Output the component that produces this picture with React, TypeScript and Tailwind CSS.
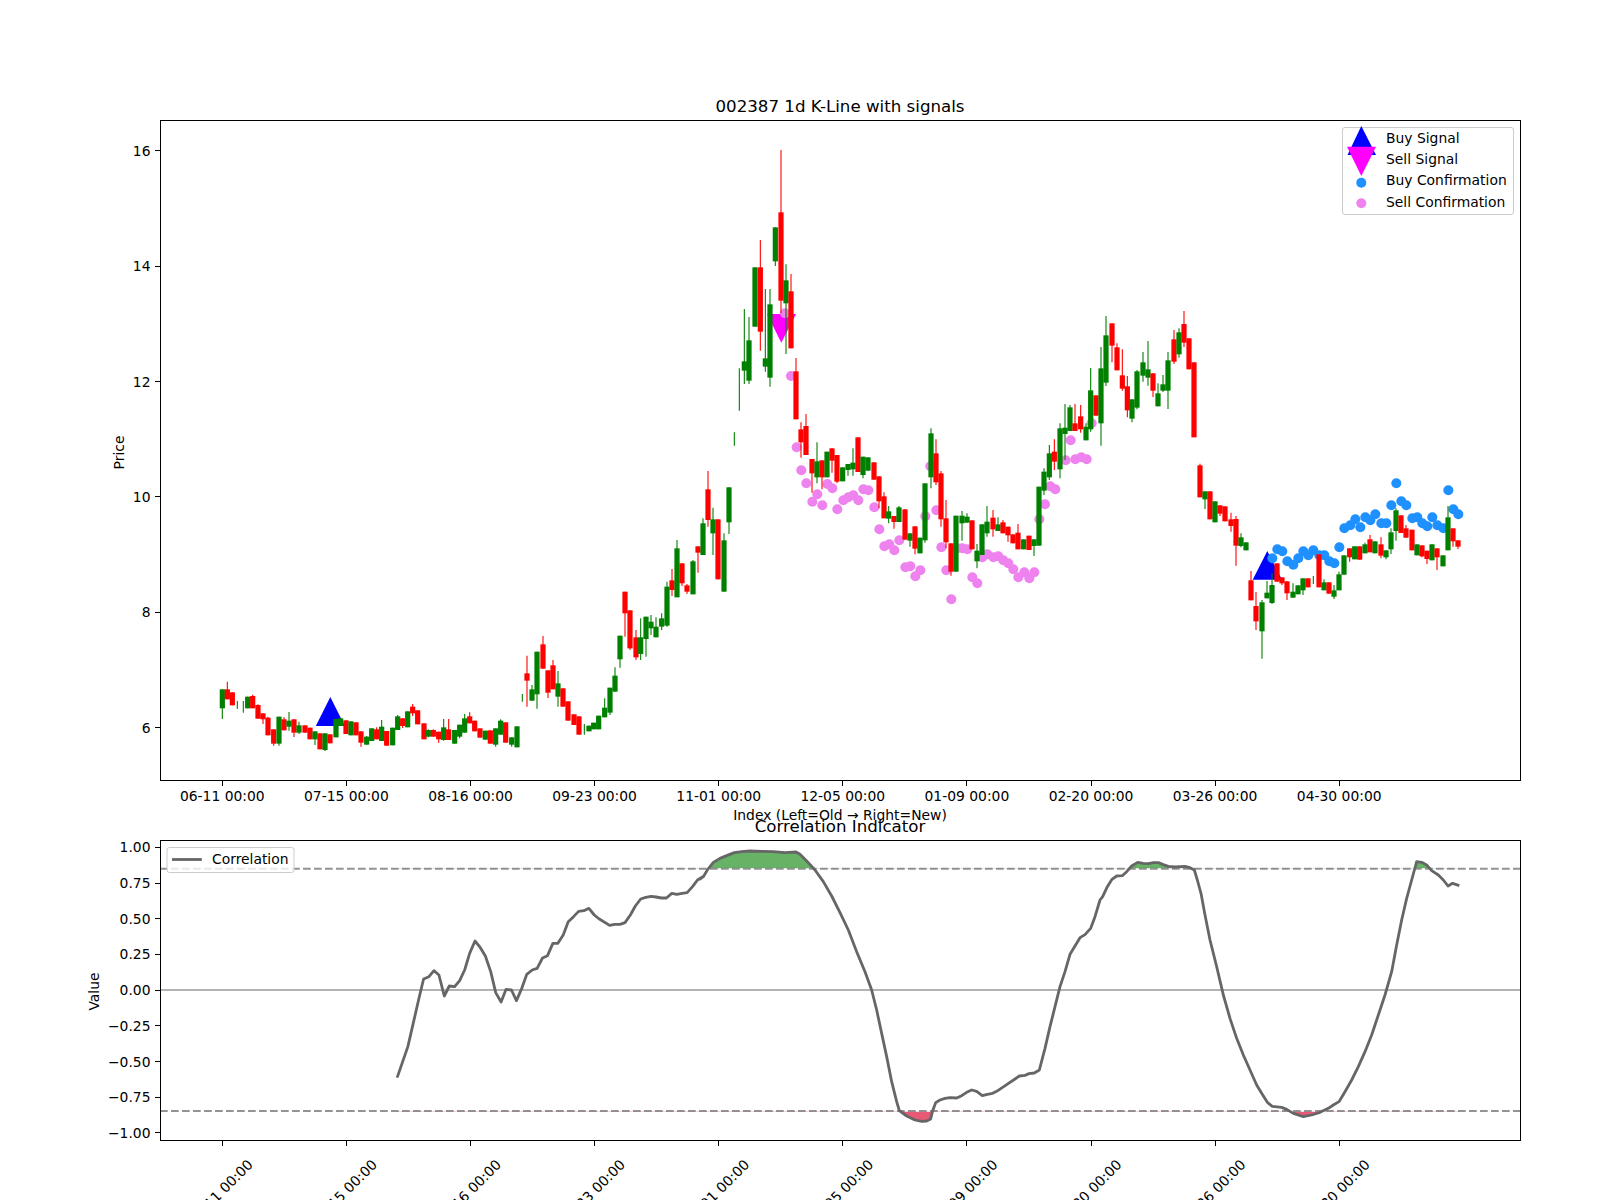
import React from "react";

type Row = [number, "r" | "g", number, number, number?, number?];
type Candle = { x: number; c: string; top: number; bot: number; wt: number; wb: number };

const conv = (x0: number, y0: number, rows: Row[]): Candle[] =>
  rows.map(([zx, c, t, b, wt, wb]) => ({
    x: x0 + zx / 3,
    c: c === "r" ? "#ff0000" : "#008000",
    top: y0 + t / 3,
    bot: y0 + b / 3,
    wt: y0 + (wt ?? t) / 3,
    wb: y0 + (wb ?? b) / 3,
  }));

const candles: Candle[] = [
  ...conv(150, 600, [
    [217, "g", 268, 325, 268, 357], [232, "r", 268, 298, 245, 298], [247, "r", 277, 316], [262, "g", 303, 303, 303, 327],
    [280, "g", 303, 303, 303, 338], [293, "g", 290, 325], [308, "r", 288, 325, 284, 325], [324, "r", 315, 356, 313, 356],
    [339, "r", 340, 358, 340, 372], [354, "r", 353, 406, 350, 406], [371, "r", 388, 431, 388, 437], [387, "g", 350, 431, 350, 437],
    [402, "r", 358, 391, 352, 391], [417, "g", 362, 380, 336, 392], [432, "r", 358, 398, 358, 411], [447, "g", 376, 398, 365, 402],
    [465, "r", 376, 398], [480, "r", 383, 418], [495, "g", 394, 418, 394, 435], [510, "r", 400, 448],
    [525, "g", 400, 450, 400, 453], [540, "r", 403, 430], [558, "g", 357, 412], [572, "g", 355, 378],
    [588, "r", 361, 402], [603, "g", 364, 406], [618, "r", 367, 406], [633, "r", 394, 428, 394, 440],
    [650, "g", 410, 434, 408, 434], [665, "g", 385, 423], [680, "r", 388, 418, 382, 418], [695, "g", 380, 423, 360, 423],
    [710, "r", 393, 437], [728, "g", 383, 436], [743, "g", 349, 390, 345, 390], [758, "r", 355, 378, 355, 384],
    [773, "g", 334, 382], [788, "r", 320, 340, 312, 348], [803, "r", 331, 373], [822, "r", 370, 418],
    [835, "g", 390, 410, 388, 412], [850, "r", 390, 410, 388, 410], [866, "r", 395, 418, 395, 428], [881, "g", 382, 420, 357, 422],
    [896, "r", 388, 420, 357, 420], [914, "g", 390, 431], [929, "g", 374, 410, 374, 415], [944, "g", 355, 398, 342, 398],
    [959, "r", 349, 370, 337, 370], [974, "r", 362, 394], [990, "r", 385, 413], [1006, "g", 392, 419],
    [1021, "r", 391, 431], [1037, "g", 385, 434, 385, 440], [1052, "g", 362, 404, 358, 404], [1067, "r", 367, 428],
    [1085, "g", 412, 434, 412, 440], [1101, "g", 379, 442], [1117, "g", 282, 282, 282, 305], [1131, "r", 220, 242, 167, 320],
    [1146, "g", 268, 302, 255, 302], [1161, "g", 155, 283, 155, 326], [1179, "r", 133, 206, 108, 206], [1194, "r", 211, 278, 211, 294],
    [1209, "r", 196, 268, 180, 268], [1224, "g", 250, 290, 213, 320], [1239, "r", 265, 320], [1254, "r", 304, 362],
    [1272, "r", 343, 375], [1287, "r", 349, 404], [1303, "g", 372, 372, 372, 404], [1317, "g", 377, 394],
    [1331, "g", 368, 388], [1346, "g", 347, 388], [1364, "g", 323, 352, 295, 352], [1380, "g", 263, 338, 263, 345],
    [1395, "g", 227, 275, 202, 275], [1410, "g", 107, 178, 107, 203],
  ]),
  ...conv(520, 400, [
    [315, "r", 575, 640, 575, 710], [330, "r", 631, 745, 631, 750], [348, "r", 712, 772, 690, 780], [362, "g", 712, 762, 655, 780],
    [378, "g", 650, 717, 650, 770], [393, "g", 665, 685, 645, 705], [408, "g", 680, 712, 652, 712], [425, "g", 655, 680, 640, 690],
    [441, "g", 560, 677, 545, 680], [456, "r", 541, 570, 507, 588], [471, "g", 445, 592, 420, 592], [486, "r", 490, 550, 490, 558],
    [501, "r", 556, 575, 552, 582], [519, "g", 484, 583, 480, 583], [534, "r", 439, 458, 439, 518], [549, "g", 370, 465, 355, 465],
    [564, "r", 268, 360, 213, 380], [579, "g", 358, 400, 323, 465], [594, "r", 358, 538], [612, "g", 421, 575, 400, 575],
    [627, "g", 262, 367, 262, 402], [643, "g", 97, 97, 97, 137],
  ]),
  ...conv(650, 130, [
    [268, "g", 715, 715, 715, 842], [283, "g", 694, 722, 537, 762], [297, "g", 631, 752, 561, 762], [315, "g", 412, 590],
    [331, "r", 412, 605, 330, 662], [346, "g", 685, 710, 477, 725], [360, "g", 523, 743, 477, 770], [376, "g", 292, 394, 292, 408],
    [393, "r", 247, 512, 60, 550], [408, "g", 451, 520, 403, 672], [423, "r", 484, 655, 432, 655], [438, "r", 724, 868, 684, 868],
  ]),
  ...conv(780, 420, [
    [63, "r", 28, 67, 7, 113], [78, "r", 18, 105, -18, 105], [96, "r", 117, 160, 117, 218], [111, "g", 124, 172, 67, 190],
    [126, "r", 121, 172, 121, 208], [141, "g", 95, 172], [156, "r", 85, 122, 85, 158], [171, "r", 105, 185, 105, 190],
    [188, "g", 142, 184], [204, "g", 132, 150, 132, 167], [219, "g", 128, 148, 85, 167], [234, "r", 52, 156],
    [249, "g", 110, 165, 110, 175], [264, "g", 112, 152], [282, "r", 127, 179], [297, "r", 169, 244, 169, 265],
    [312, "r", 229, 295, 217, 295], [326, "g", 274, 296, 258, 310], [342, "r", 288, 306, 288, 326], [357, "g", 262, 306, 258, 306],
    [375, "r", 268, 359], [390, "g", 340, 362, 340, 380], [405, "r", 319, 386, 319, 403], [420, "g", 353, 400],
    [435, "g", 190, 361, 190, 368], [453, "g", 40, 172, 25, 205], [468, "r", 100, 187, 58, 195], [483, "r", 160, 298, 153, 320],
    [498, "r", 295, 367, 240, 385], [513, "r", 370, 455, 370, 467], [528, "g", 287, 455], [546, "g", 287, 310, 273, 362],
    [561, "g", 290, 308, 280, 308], [576, "r", 301, 388], [591, "g", 392, 424, 372, 445], [606, "g", 313, 405],
    [621, "g", 305, 340, 258, 350], [639, "r", 293, 328, 270, 350], [654, "g", 313, 333, 292, 333], [669, "r", 307, 340, 300, 340],
    [684, "r", 320, 346, 320, 365], [699, "r", 343, 370], [714, "r", 338, 388, 312, 388], [731, "g", 358, 388],
    [747, "r", 347, 390], [762, "g", 358, 378, 358, 408], [777, "g", 200, 377],
  ]),
  ...conv(1040, 300, [
    [12, "g", 515, 572, 505, 585], [28, "g", 460, 532, 435, 540], [43, "r", 455, 485, 418, 510], [60, "g", 385, 508, 370, 535],
    [75, "g", 383, 402, 312, 480], [90, "g", 322, 393, 315, 393], [105, "r", 370, 393, 312, 393], [122, "r", 349, 388, 315, 398],
    [138, "g", 380, 421, 370, 421], [152, "g", 271, 388, 204, 395], [168, "r", 286, 347], [183, "g", 205, 370, 141, 437],
    [198, "g", 106, 248, 48, 258], [216, "r", 70, 137, 70, 187], [231, "r", 142, 211, 130, 211], [247, "r", 226, 266, 148, 272],
    [262, "r", 259, 331, 228, 352], [276, "g", 298, 356, 298, 367], [291, "g", 214, 323, 210, 328], [309, "g", 187, 227, 156, 245],
    [324, "g", 208, 233, 123, 257], [339, "r", 220, 272, 220, 291], [354, "g", 280, 319, 250, 319], [369, "g", 253, 272, 225, 276],
    [384, "g", 181, 272, 156, 327], [402, "r", 118, 185, 90, 192], [417, "g", 97, 163, 85, 173], [432, "r", 72, 128, 33, 141],
    [447, "r", 115, 208], [462, "r", 187, 412], [480, "r", 496, 592, 491, 592], [495, "g", 574, 598, 574, 627],
    [510, "r", 574, 658], [525, "g", 604, 667], [540, "r", 616, 641, 616, 648], [555, "r", 619, 664],
  ]),
  ...conv(1220, 450, [
    [33, "r", 208, 228, 188, 245], [48, "r", 207, 287, 198, 347], [63, "g", 262, 288, 250, 292], [78, "g", 277, 301],
    [93, "r", 391, 451, 363, 451], [108, "r", 468, 514, 426, 540], [126, "g", 457, 544, 450, 626], [141, "g", 428, 445, 393, 445],
    [156, "g", 405, 459, 370, 462], [171, "r", 340, 395], [186, "r", 382, 400, 382, 405], [201, "r", 394, 430, 394, 450],
    [219, "g", 425, 443, 400, 443], [234, "g", 406, 433], [249, "g", 385, 421, 385, 435], [264, "r", 385, 412],
    [280, "g", 378, 378, 378, 402], [297, "r", 313, 412], [312, "g", 397, 421, 388, 421], [327, "r", 397, 431],
    [342, "g", 421, 440, 405, 447], [357, "g", 373, 421, 365, 421], [372, "g", 316, 374], [389, "r", 295, 322, 295, 335],
    [404, "g", 289, 328], [419, "r", 289, 329], [435, "g", 283, 310, 278, 310], [450, "r", 268, 307, 255, 307],
    [465, "g", 274, 310], [483, "r", 283, 317, 262, 325], [498, "g", 301, 322, 301, 328], [513, "g", 247, 298, 235, 312],
    [528, "g", 181, 243, 175, 272], [543, "r", 196, 249], [558, "r", 235, 263, 225, 263], [576, "r", 239, 301],
    [591, "g", 283, 316], [606, "r", 286, 319, 286, 322], [621, "r", 302, 327, 302, 342], [636, "g", 283, 331],
    [651, "r", 295, 322, 295, 360], [669, "g", 316, 349], [684, "g", 202, 301, 168, 301], [699, "r", 235, 274, 235, 290],
    [714, "r", 271, 290, 271, 297],
  ]),
];

const pts = (x0: number, y0: number, list: number[][], sx = 3) => list.map(([x, y]) => [x0 + x / sx, y0 + y / 3]);

const pink = [
  [785, 313.3], [791, 376],
  ...pts(780, 420, [
    [50, 82], [64, 151], [79, 190], [97, 245], [112, 223], [127, 256], [142, 192], [157, 205], [172, 268], [190, 241], [205, 232], [220, 226],
    [235, 241], [250, 208], [265, 211], [283, 262], [298, 328], [313, 379], [328, 373], [343, 391], [358, 361], [376, 442], [391, 439], [406, 469],
    [421, 451], [436, 289], [451, 139], [469, 271], [484, 382], [499, 451], [514, 538], [532, 385], [547, 385], [562, 388], [577, 472], [592, 490],
    [607, 412], [622, 403], [640, 412], [655, 409], [670, 421], [685, 430], [700, 448], [715, 472], [733, 457], [748, 475], [763, 457], [778, 298],
    [795, 253], [811, 199], [826, 208], [857, 121], [886, 118], [872, 61],
  ]),
  ...pts(1040, 300, [[124, 472], [140, 478], [155, 370]]),
];

const blue = pts(1220, 450, [
  [157, 325], [172, 298], [187, 304], [202, 334], [220, 344], [235, 325], [250, 304], [265, 316], [280, 301], [298, 316], [313, 316], [328, 334], [343, 340],
  [358, 292], [373, 235], [391, 226], [406, 208], [421, 232], [436, 202], [451, 211], [466, 193], [484, 220], [499, 220], [514, 166], [529, 100], [544, 154],
  [559, 166], [577, 205], [592, 202], [607, 220], [622, 229], [637, 202], [652, 226], [670, 235], [685, 121], [700, 178], [715, 193],
]);

const corr = [
  ...pts(150, 820, [
    [692, 773], [722, 680], [737, 610], [752, 540], [766, 477], [781, 470], [795, 452], [809, 465], [824, 528], [838, 498], [853, 500], [867, 482], [881, 450],
    [895, 400], [910, 363], [925, 383], [939, 408], [954, 455], [968, 518], [983, 546], [997, 508], [1012, 510], [1026, 542], [1041, 505], [1055, 463], [1070, 450],
    [1084, 445], [1099, 414], [1113, 407], [1128, 370], [1142, 370], [1157, 345], [1171, 305], [1186, 290], [1200, 274], [1215, 272], [1229, 265], [1244, 285],
    [1258, 297], [1287, 316], [1301, 313], [1316, 313], [1330, 308], [1345, 285], [1359, 258], [1374, 237], [1388, 232], [1403, 229], [1417, 231], [1432, 234],
    [1446, 234], [1461, 220], [1475, 223], [1490, 220], [1504, 218], [1519, 200], [1533, 180], [1548, 170],
  ], 2.8),
  ...pts(700, 840, [
    [0, 117], [10, 110], [22, 90], [40, 67], [60, 55], [80, 47], [103, 38], [125, 35], [150, 33], [185, 34], [220, 35], [255, 38], [288, 36], [300, 43], [320, 63],
    [345, 90], [370, 125], [395, 168], [420, 218], [445, 270], [470, 335], [495, 395], [515, 450], [530, 510], [545, 580], [560, 650], [575, 725], [590, 785],
    [598, 812], [620, 828], [645, 840], [665, 844], [680, 843], [692, 837], [698, 812], [707, 788], [720, 780], [735, 775], [750, 773], [770, 774], [785, 767],
    [800, 757], [815, 750], [830, 754], [847, 767], [862, 763], [878, 760], [890, 754], [920, 734], [945, 717], [958, 708], [975, 706], [987, 701], [1003, 699],
    [1018, 690], [1035, 625], [1050, 560], [1065, 500], [1080, 440], [1095, 395], [1110, 343], [1125, 318], [1140, 293], [1155, 284], [1172, 265], [1185, 230],
  ]),
  ...pts(1090, 840, [
    [30, 180], [38, 170], [52, 140], [66, 118], [80, 108], [97, 107], [110, 95], [125, 78], [143, 67], [160, 70], [175, 71], [190, 68], [205, 68], [220, 74], [235, 79],
    [255, 81], [270, 80], [285, 79], [300, 83], [313, 90], [322, 120], [333, 160], [345, 225], [360, 300], [380, 380], [400, 465], [420, 535], [440, 595], [460, 645],
    [480, 690], [500, 735], [515, 760], [532, 787], [547, 799], [575, 802], [590, 808], [610, 820], [640, 830], [665, 825], [690, 817], [715, 805], [730, 795],
    [747, 785], [765, 755], [785, 720], [805, 680], [825, 635], [845, 585], [865, 525], [885, 465], [905, 395], [920, 315], [935, 240], [950, 175], [965, 120],
    [980, 65], [995, 67], [1010, 75], [1025, 92], [1045, 105], [1060, 120], [1074, 138], [1088, 130], [1108, 137],
  ]),
];

const poly = corr.map((p) => p.join(",")).join(" ");
const first = corr[0][0];
const last = corr[corr.length - 1][0];
const fillPoly = (y: number) => `${first},${y} ${poly} ${last},${y}`;

const dates = ["06-11 00:00", "07-15 00:00", "08-16 00:00", "09-23 00:00", "11-01 00:00", "12-05 00:00", "01-09 00:00", "02-20 00:00", "03-26 00:00", "04-30 00:00"];
const tickX = dates.map((_, i) => 222.3 + i * 124.1);
const priceTicks = [
  ["16", 150.5], ["14", 266], ["12", 381.5], ["10", 496.5], ["8", 612], ["6", 727.5],
] as [string, number][];
const valTicks = ["1.00", "0.75", "0.50", "0.25", "0.00", "−0.25", "−0.50", "−0.75", "−1.00"].map((t, i) => [t, 847.3 + i * 35.7] as [string, number]);

const label = "fill-black font-['DejaVu_Sans',sans-serif] text-[13.89px]";
const title = "fill-black font-['DejaVu_Sans',sans-serif] text-[16.67px]";
const snap = (v: number) => Math.floor(v) + 0.5;

function PriceChart() {
  return (
    <svg className="block h-[822px] w-[1600px] shrink-0 overflow-visible" viewBox="0 0 1600 822">
      <polygon points="330.3,697 315.8,726 344.8,726" fill="#0000ff" />
      <polygon points="1267.3,551 1252.7,579.7 1282,579.7" fill="#0000ff" />
      <polygon points="781.3,342.7 767,314 796,314" fill="#ff00ff" />
      {pink.map(([x, y], i) => <circle key={i} cx={x} cy={y} r={5} fill="#ee82ee" />)}
      {blue.map(([x, y], i) => <circle key={i} cx={x} cy={y} r={5} fill="#1e90ff" />)}
      {candles.map((d, i) => (
        <g key={i}>
          <line x1={d.x} x2={d.x} y1={d.wt} y2={d.wb} stroke={d.c} strokeWidth={1.1} />
          {d.bot > d.top && <rect x={d.x - 2.6} y={d.top} width={5.2} height={d.bot - d.top} fill={d.c} />}
        </g>
      ))}
      <rect x={160.5} y={120.5} width={1360} height={660} fill="none" stroke="#000" strokeWidth={1} shapeRendering="crispEdges" />
      {priceTicks.map(([t, y]) => (
        <g key={t}>
          <line x1={155} x2={160} y1={snap(y)} y2={snap(y)} stroke="#000" strokeWidth={1} shapeRendering="crispEdges" />
          <text x={150.5} y={y + 5} textAnchor="end" className={label}>{t}</text>
        </g>
      ))}
      {tickX.map((x, i) => (
        <g key={x}>
          <line x1={snap(x)} x2={snap(x)} y1={781} y2={786} stroke="#000" strokeWidth={1} shapeRendering="crispEdges" />
          <text x={x} y={801} textAnchor="middle" className={label}>{dates[i]}</text>
        </g>
      ))}
      <text x={840} y={112} textAnchor="middle" className={title}>002387 1d K-Line with signals</text>
      <text x={840} y={820} textAnchor="middle" className={label}>Index (Left=Old → Right=New)</text>
      <text transform="translate(124,452.5) rotate(-90)" textAnchor="middle" className={label}>Price</text>
      <rect x={1342.5} y={127.5} width={171} height={87} rx={2.5} fill="#fff" fillOpacity={0.8} stroke="#ccc" strokeWidth={1} />
      <polygon points="1361.3,126 1347.5,155 1376,155" fill="#0000ff" />
      <polygon points="1361.3,176 1347,146.7 1376,146.7" fill="#ff00ff" />
      <circle cx={1361.3} cy={182.7} r={5} fill="#1e90ff" />
      <circle cx={1361.3} cy={203.3} r={5} fill="#ee82ee" />
      <text x={1386} y={143} className={label}>Buy Signal</text>
      <text x={1386} y={164} className={label}>Sell Signal</text>
      <text x={1386} y={185} className={label}>Buy Confirmation</text>
      <text x={1386} y={206.5} className={label}>Sell Confirmation</text>
    </svg>
  );
}

function CorrelationChart() {
  return (
    <svg className="block h-[378px] w-[1600px] shrink-0 overflow-visible" viewBox="0 822 1600 378">
      <defs>
        <clipPath id="above"><rect x={160} y={840} width={1360} height={28.6} /></clipPath>
        <clipPath id="below"><rect x={160} y={1111.4} width={1360} height={28} /></clipPath>
      </defs>
      <polygon points={fillPoly(868.6)} fill="#008000" fillOpacity={0.6} clipPath="url(#above)" />
      <polygon points={fillPoly(1111.4)} fill="#dc143c" fillOpacity={0.7} clipPath="url(#below)" />
      <line x1={160} x2={1520} y1={868.8} y2={868.8} stroke="#808080" strokeOpacity={0.85} strokeWidth={2} strokeDasharray="7.7 3.3" />
      <line x1={160} x2={1520} y1={1111} y2={1111} stroke="#808080" strokeOpacity={0.85} strokeWidth={2} strokeDasharray="7.7 3.3" />
      <line x1={160} x2={1520} y1={990} y2={990} stroke="#808080" strokeOpacity={0.6} strokeWidth={2} />
      <polyline points={poly} fill="none" stroke="#666666" strokeWidth={2.8} strokeLinejoin="round" />
      <rect x={160.5} y={840.5} width={1360} height={300} fill="none" stroke="#000" strokeWidth={1} shapeRendering="crispEdges" />
      {valTicks.map(([t, y]) => (
        <g key={t}>
          <line x1={155} x2={160} y1={snap(y)} y2={snap(y)} stroke="#000" strokeWidth={1} shapeRendering="crispEdges" />
          <text x={150.5} y={y + 5} textAnchor="end" className={label}>{t}</text>
        </g>
      ))}
      {tickX.map((x, i) => (
        <g key={x}>
          <line x1={snap(x)} x2={snap(x)} y1={1141} y2={1146} stroke="#000" strokeWidth={1} shapeRendering="crispEdges" />
          <text transform={`translate(${x - 2},1192) rotate(-45)`} textAnchor="middle" dy="5" className={label}>{dates[i]}</text>
        </g>
      ))}
      <text x={840} y={831.5} textAnchor="middle" className={title}>Correlation Indicator</text>
      <text transform="translate(99,991.5) rotate(-90)" textAnchor="middle" className={label}>Value</text>
      <rect x={167} y={847.5} width={127} height={25} rx={2.5} fill="#fff" fillOpacity={0.8} stroke="#ccc" strokeWidth={1} />
      <line x1={172} x2={201.8} y1={859.5} y2={859.5} stroke="#666666" strokeWidth={2.8} />
      <text x={212} y={863.5} className={label}>Correlation</text>
    </svg>
  );
}

export default function App() {
  return (
    <div className="flex h-[1200px] w-[1600px] flex-col overflow-hidden bg-white">
      <PriceChart />
      <CorrelationChart />
    </div>
  );
}
